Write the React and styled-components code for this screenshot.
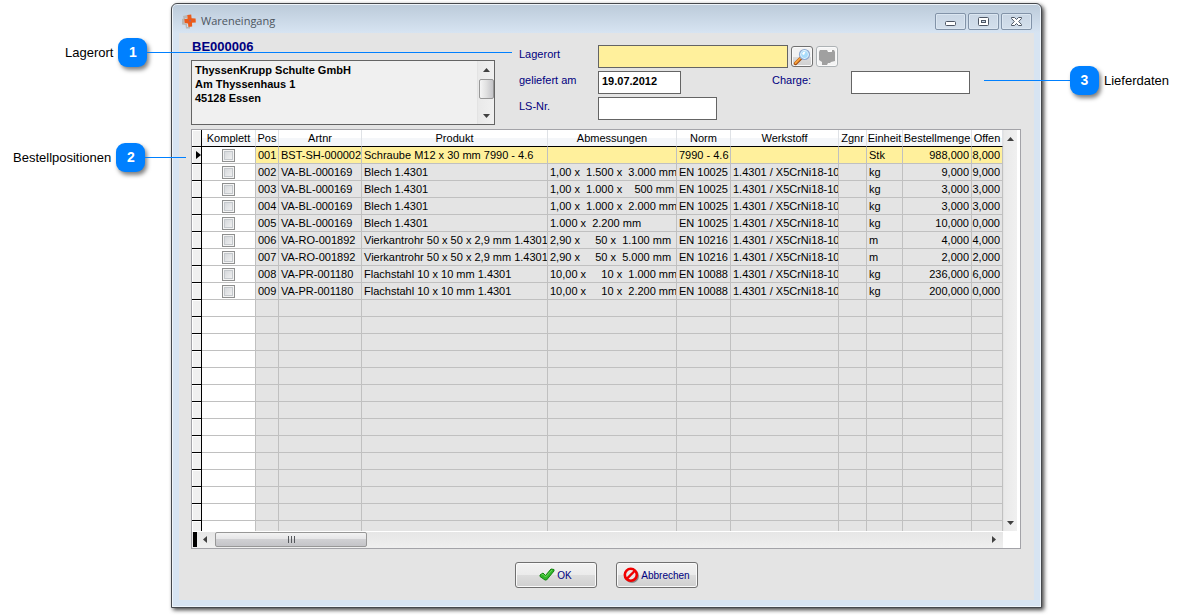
import React from "react";
import styled, { createGlobalStyle, css } from "styled-components";

const GlobalStyle = createGlobalStyle`
  * {
    box-sizing: border-box;
  }

  body {
    margin: 0;
    background: #ffffff;
    color: #000000;
    font-family: "Liberation Sans", Arial, sans-serif;
    font-size: 11px;
  }

  button,
  input {
    font: inherit;
    color: inherit;
  }
`;

const Page = styled.div`
  position: relative;
  min-width: 1000px;
  padding: 3px 141px 8px 171px;
`;

const Window = styled.main`
  border: 1px solid #45484c;
  border-radius: 6px 6px 0 0;
  background: #d7e4f2;
  box-shadow: inset 0 0 0 1px #eef4fa, 2px 2px 4px rgba(0, 0, 0, 0.75);
  padding: 1px 7px 7px;
`;

const TitleBar = styled.header`
  display: flex;
  align-items: center;
  height: 28px;
  margin: 0 -6px;
  padding: 4px 8px 0;
  border-radius: 4px 4px 0 0;
  background: linear-gradient(#bccbda, #d7e4f2);
`;

const Title = styled.h1`
  flex: 1;
  margin: 0 0 0 4px;
  font-family: "Open Sans", "Noto Sans", sans-serif;
  font-size: 11px;
  font-weight: 400;
  line-height: 16px;
  color: #4c555f;
`;

const WindowButtons = styled.div`
  display: flex;
  gap: 2px;
`;

const WindowButton = styled.button`
  display: flex;
  align-items: center;
  justify-content: center;
  width: 31px;
  height: 17px;
  padding: 0;
  border: 1px solid #8293a8;
  border-radius: 2px;
  background: linear-gradient(#c9d6e4, #d3dfec);
  box-shadow: inset 0 0 0 1px #dbe6f1;
`;

const Client = styled.div`
  padding: 6px 13px 12px 12px;
  background: #e4e4e4;
`;

const Top = styled.section`
  display: grid;
  grid-template-columns: 304px 1fr;
  column-gap: 24px;
  margin-bottom: 4px;
`;

const OrderNumber = styled.h2`
  margin: 0 0 5px;
  padding-left: 1px;
  font-size: 13px;
  line-height: 16px;
  color: #000080;
`;

const AddressBox = styled.div`
  display: flex;
  height: 65px;
  border: 1px solid #646464;
  background: #f0f0f0;
`;

const Address = styled.address`
  flex: 1;
  padding: 2px 3px;
  font-style: normal;
  font-weight: 700;
  line-height: 14px;
`;

const Fields = styled.form`
  display: grid;
  grid-template-columns: 79px 174px 79px 1fr;
  grid-auto-rows: 23px;
  row-gap: 3px;
  padding-top: 6px;
`;

const Label = styled.label`
  padding-top: 2px;
  line-height: 14px;
  color: #000080;
`;

const StoreField = styled.div`
  grid-column: 2 / -1;
  display: flex;
  align-items: center;
  gap: 3px;
`;

const TextBox = styled.input`
  width: ${(props) => props.$width};
  height: 23px;
  padding: 0 3px 4px;
  border: 1px solid #646464;
  border-radius: 0;
  background: ${(props) => (props.$required ? "#fff09c" : "#ffffff")};
  font-weight: 700;
  outline: none;
`;

const IconButton = styled.button`
  display: flex;
  align-items: center;
  justify-content: center;
  width: 22px;
  height: 21px;
  padding: 0;
  border: 1px solid #707070;
  border-radius: 3px;
  background: linear-gradient(#f2f2f2 50%, #dddddd 50%, #cfcfcf);
  box-shadow: inset 0 0 0 1px #fafafa;

  &:disabled {
    border-color: #adb2b5;
    background: #f4f4f4;
  }
`;

const GridFrame = styled.section`
  display: grid;
  grid-template-columns: 1fr 17px;
  border: 1px solid #a3a3a8;
  background: #ffffff;
`;

const Table = styled.table`
  width: 100%;
  table-layout: fixed;
  border-collapse: separate;
  border-spacing: 0;
  line-height: 16px;
  background: #e4e4e4;
`;

const Col = styled.col`
  width: ${(props) => props.$width};
`;

const HeadCell = styled.th`
  height: 17px;
  padding: 0;
  border-right: 1px solid #dfe2e6;
  border-bottom: 1px solid #000000;
  background: linear-gradient(#ffffff 50%, #f4f6f9 50%);
  font-weight: 400;
  white-space: nowrap;
`;

const SelectorHead = styled.td`
  height: 17px;
  padding: 0;
  border-right: 1px solid #000000;
  border-bottom: 1px solid #000000;
  background: #f0f0f0;
  box-shadow: inset 1px 1px 0 #ffffff;
`;

const Cell = styled.td`
  height: 17px;
  padding: ${(props) => (props.$amount ? "0 2px 0 0" : "0 0 0 2px")};
  border-right: 1px solid #c0c0c0;
  border-bottom: 1px solid #c0c0c0;
  white-space: pre;
  overflow: hidden;

  ${(props) =>
    props.$check &&
    css`
      padding: 0;
      background: #ffffff;
    `}
`;

const SelectorCell = styled(SelectorHead)`
  padding-left: 4px;

  svg {
    display: block;
  }
`;

const Amount = styled.div`
  display: flex;
  justify-content: flex-end;
  overflow: hidden;
`;

const Row = styled.tr`
  ${(props) =>
    props.$active &&
    css`
      ${Cell}:nth-child(n + 3) {
        background: #fff09c;
      }
    `}

  ${(props) =>
    props.$last &&
    css`
      ${Cell}, ${SelectorCell} {
        height: 10px;
        border-bottom: 0;
      }
    `}
`;

const CheckBox = styled.input`
  appearance: none;
  display: block;
  width: 13px;
  height: 13px;
  margin: 0 auto;
  border: 1px solid #8e8f8f;
  background: linear-gradient(135deg, #cfd2d6, #f6f6f6);
  box-shadow: inset 0 0 0 1px #f4f4f4, inset 0 0 0 2px #c4c8cc;
`;

const VerticalBar = styled.div`
  display: flex;
  flex-direction: column;
  align-items: center;
  width: 17px;
  padding: 6px 0 4px;
  border-left: 1px solid #e3e3e3;
  border-right: ${(props) => (props.$edge ? "3px solid #ffffff" : "0")};
  background: linear-gradient(90deg, #e9e9e9, #f0f0f0);
`;

const VerticalThumb = styled.div`
  width: 15px;
  height: 20px;
  margin-top: 5px;
  border: 1px solid #979797;
  border-radius: 2px;
  background: linear-gradient(90deg, #f5f5f5, #e0e0e0 50%, #c4c4c8);
`;

const HorizontalBar = styled.div`
  display: flex;
  align-items: center;
  height: 17px;
  padding: 0 5px 1px 1px;
  border-top: 1px solid #ffffff;
  background: linear-gradient(#e6e6e6, #efefef);
`;

const SplitHandle = styled.div`
  width: 4px;
  height: 15px;
  margin-right: 5px;
  background: #000000;
`;

const HorizontalThumb = styled.div`
  display: flex;
  align-items: center;
  justify-content: center;
  gap: 2px;
  width: 152px;
  height: 15px;
  margin-left: 6px;
  border: 1px solid #979797;
  border-radius: 2px;
  background: linear-gradient(#f3f3f3, #e4e4e6 50%, #d0d0d3 50%, #c4c4c8);
`;

const Grip = styled.span`
  width: 1px;
  height: 7px;
  background: #55585c;
`;

const Spacer = styled.div`
  flex: 1;
`;

const Actions = styled.footer`
  display: flex;
  justify-content: center;
  gap: 19px;
  margin-top: 13px;
`;

const ActionButton = styled.button`
  display: flex;
  align-items: center;
  justify-content: center;
  gap: 2px;
  width: 82px;
  height: 26px;
  padding: 0;
  border: 1px solid #707070;
  border-radius: 3px;
  background: linear-gradient(#f2f2f2, #ebebeb 48%, #dddddd 50%, #cfcfcf);
  box-shadow: inset 0 0 0 1px #fafafa;
  font-size: 10px;
  color: #000080;
`;

const Callout = styled.aside`
  position: absolute;
  top: ${(props) => props.$top};
  left: ${(props) => props.$left};
  right: ${(props) => props.$right};
  display: flex;
  align-items: center;
  font-size: 13px;
  line-height: 16px;
  pointer-events: none;
`;

const CalloutBadge = styled.span`
  width: 29px;
  height: 29px;
  margin: ${(props) => (props.$before ? "0 5px 0 0" : "0 0 0 5px")};
  border-radius: 9px;
  background: #0080ff;
  box-shadow: 2px 3px 4px rgba(0, 0, 0, 0.5);
  font-size: 14px;
  font-weight: 700;
  line-height: 29px;
  text-align: center;
  color: #ffffff;
`;

const CalloutLine = styled.span`
  width: ${(props) => props.$width};
  height: 1px;
  background: #0080ff;
`;

const Arrow = ({ dir }) => {
  const shapes = {
    up: "M0 5 L3.5 1 L7 5 Z",
    down: "M0 1 L3.5 5 L7 1 Z",
    left: "M5 0 L1 3.5 L5 7 Z",
    right: "M1 0 L5 3.5 L1 7 Z",
  };
  return (
    <svg width="7" height="7" viewBox="0 0 7 7" aria-hidden="true">
      <path d={shapes[dir]} fill="#404040" />
    </svg>
  );
};

const LogoIcon = () => (
  <svg width="16" height="16" viewBox="0 0 16 16" aria-hidden="true">
    <path
      d="M2 3 L6 2 V5 H4 V7 L3 10 L6 11 V14 H9 V15.5 H5 L4.5 12 L1 11.5 V6 L2.5 5.5 Z"
      fill="#b9b7b5"
    />
    <path
      d="M6.2 2 L10.2 1.6 L10.6 5.2 L14.6 5.4 L14.8 9.6 L11 9.8 L11.2 13.6 L7.4 14 L7 10.4 L3.6 10 L3.4 6 L6.6 5.8 Z"
      fill="#ea5b1b"
    />
    <circle cx="9" cy="7.8" r="1" fill="#a2647c" />
  </svg>
);

const MinimizeIcon = () => (
  <svg width="13" height="11" viewBox="0 0 13 11" aria-hidden="true">
    <rect x="1.5" y="5.5" width="10" height="4" rx="1" fill="#fff" stroke="#4d5664" />
  </svg>
);

const MaximizeIcon = () => (
  <svg width="13" height="11" viewBox="0 0 13 11" aria-hidden="true">
    <rect x="1.5" y="1.5" width="10" height="8" rx="1" fill="#fff" stroke="#4d5664" />
    <rect x="4.5" y="4.5" width="4" height="2" fill="#c9d6e4" stroke="#4d5664" />
  </svg>
);

const CloseIcon = () => (
  <svg width="13" height="11" viewBox="0 0 13 11" aria-hidden="true">
    <path
      d="M1.5 1.5 H4.5 L6.5 3.5 L8.5 1.5 H11.5 V2.5 L8.7 5.5 L11.5 8.5 V9.5 H8.5 L6.5 7.5 L4.5 9.5 H1.5 V8.5 L4.3 5.5 L1.5 2.5 Z"
      fill="#fff"
      stroke="#4d5664"
    />
  </svg>
);

const SearchIcon = () => (
  <svg width="18" height="18" viewBox="0 0 18 18" aria-hidden="true">
    <path d="M2.5 15.5 L8 10" stroke="#a04c10" strokeWidth="3.4" strokeLinecap="round" />
    <path d="M2.5 15 L7.5 10" stroke="#f9a13a" strokeWidth="2" strokeLinecap="round" />
    <circle cx="11.5" cy="6.5" r="5" fill="#e4f6ff" stroke="#8fa9d0" strokeWidth="1.2" />
    <circle cx="11.5" cy="6.5" r="3.4" fill="#a9dcfb" />
    <path d="M9 6 Q10 3.5 12.5 3.6 L11 7 Z" fill="#fff" />
  </svg>
);

const BoxIcon = () => (
  <svg width="18" height="18" viewBox="0 0 18 18" aria-hidden="true">
    <path
      d="M2 2 H9 L10 4 H14 V2 H16 L17 4 V13 L13 14 L12 15 H10 L9 17 H4 V14 L1 12 V4 Z"
      fill="#a0a0a0"
    />
    <path d="M10 3.5 H12.5 M12.5 2.5 H14" stroke="#fff" />
  </svg>
);

const CheckIcon = () => (
  <svg width="16" height="14" viewBox="0 0 16 14" aria-hidden="true">
    <path
      d="M1 7 L4 5 L6.5 7.5 L12 1 L15 1.5 V3 L7.5 12 H6 L1 8.5 Z"
      fill="#2fb52a"
      stroke="#14820f"
      strokeLinejoin="round"
    />
    <path d="M2.5 7 L4 6.2 L6.5 9 L13 2" fill="none" stroke="#6ddb58" />
  </svg>
);

const CancelIcon = () => (
  <svg width="16" height="16" viewBox="0 0 16 16" aria-hidden="true">
    <circle cx="9" cy="9" r="5.8" fill="none" stroke="#8a8a8a" strokeWidth="2.4" />
    <circle cx="7.8" cy="7.8" r="6" fill="#e8e8e8" stroke="#f00000" strokeWidth="2.6" />
    <path d="M4 11.6 L11.6 4" stroke="#f00000" strokeWidth="2.4" />
  </svg>
);

const columns = [
  { title: "Komplett", width: "54px" },
  { title: "Pos", width: "23px" },
  { title: "Artnr", width: "83px" },
  { title: "Produkt" },
  { title: "Abmessungen", width: "129px" },
  { title: "Norm", width: "54px" },
  { title: "Werkstoff", width: "108px" },
  { title: "Zgnr", width: "28px" },
  { title: "Einheit", width: "36px" },
  { title: "Bestellmenge", width: "69px" },
  { title: "Offen", width: "31px" },
];

const steel = "1.4301 / X5CrNi18-10";

const positions = [
  ["001", "BST-SH-000002", "Schraube M12 x 30 mm 7990 - 4.6", "", "7990 - 4.6", "", "Stk", "988,000"],
  ["002", "VA-BL-000169", "Blech 1.4301", "1,00 x  1.500 x  3.000 mm", "EN 10025", steel, "kg", "9,000"],
  ["003", "VA-BL-000169", "Blech 1.4301", "1,00 x  1.000 x    500 mm", "EN 10025", steel, "kg", "3,000"],
  ["004", "VA-BL-000169", "Blech 1.4301", "1,00 x  1.000 x  2.000 mm", "EN 10025", steel, "kg", "3,000"],
  ["005", "VA-BL-000169", "Blech 1.4301", "1.000 x  2.200 mm", "EN 10025", steel, "kg", "10,000"],
  ["006", "VA-RO-001892", "Vierkantrohr 50 x 50 x 2,9 mm 1.4301", "2,90 x     50 x  1.100 mm", "EN 10216", steel, "m", "4,000"],
  ["007", "VA-RO-001892", "Vierkantrohr 50 x 50 x 2,9 mm 1.4301", "2,90 x     50 x  5.000 mm", "EN 10216", steel, "m", "2,000"],
  ["008", "VA-PR-001180", "Flachstahl 10 x 10 mm 1.4301", "10,00 x     10 x  1.000 mm", "EN 10088", steel, "kg", "236,000"],
  ["009", "VA-PR-001180", "Flachstahl 10 x 10 mm 1.4301", "10,00 x     10 x  2.200 mm", "EN 10088", steel, "kg", "200,000"],
];

const emptyRows = Array.from({ length: 14 }, (_, i) => i);

const PositionRow = ({ position, active }) => {
  const [pos, artnr, product, size, norm, material, unit, amount] = position;
  return (
    <Row $active={active}>
      <SelectorCell>
        {active && (
          <svg width="5" height="8" viewBox="0 0 5 8" aria-hidden="true">
            <path d="M0 0 L5 4 L0 8 Z" />
          </svg>
        )}
      </SelectorCell>
      <Cell $check>
        <CheckBox type="checkbox" aria-label={`Komplett ${pos}`} />
      </Cell>
      <Cell>{pos}</Cell>
      <Cell>{artnr}</Cell>
      <Cell>{product}</Cell>
      <Cell>{size}</Cell>
      <Cell>{norm}</Cell>
      <Cell>{material}</Cell>
      <Cell />
      <Cell>{unit}</Cell>
      <Cell $amount>
        <Amount>{amount}</Amount>
      </Cell>
      <Cell $amount>
        <Amount>{amount}</Amount>
      </Cell>
    </Row>
  );
};

const App = () => {
  return (
    <>
      <GlobalStyle />
      <Page>
        <Window>
          <TitleBar>
            <LogoIcon />
            <Title>Wareneingang</Title>
            <WindowButtons>
              <WindowButton aria-label="Minimieren">
                <MinimizeIcon />
              </WindowButton>
              <WindowButton aria-label="Maximieren">
                <MaximizeIcon />
              </WindowButton>
              <WindowButton aria-label="Schließen">
                <CloseIcon />
              </WindowButton>
            </WindowButtons>
          </TitleBar>

          <Client>
            <Top>
              <div>
                <OrderNumber>BE000006</OrderNumber>
                <AddressBox>
                  <Address>
                    ThyssenKrupp Schulte GmbH
                    <br />
                    Am Thyssenhaus 1
                    <br />
                    45128 Essen
                  </Address>
                  <VerticalBar>
                    <Arrow dir="up" />
                    <VerticalThumb />
                    <Spacer />
                    <Arrow dir="down" />
                  </VerticalBar>
                </AddressBox>
              </div>

              <Fields>
                <Label htmlFor="lagerort">Lagerort</Label>
                <StoreField>
                  <TextBox id="lagerort" $width="190px" $required />
                  <IconButton type="button" aria-label="Suchen">
                    <SearchIcon />
                  </IconButton>
                  <IconButton type="button" aria-label="Lager" disabled>
                    <BoxIcon />
                  </IconButton>
                </StoreField>
                <Label htmlFor="geliefert">geliefert am</Label>
                <TextBox id="geliefert" $width="83px" defaultValue="19.07.2012" />
                <Label htmlFor="charge">Charge:</Label>
                <TextBox id="charge" $width="119px" />
                <Label htmlFor="lsnr">LS-Nr.</Label>
                <TextBox id="lsnr" $width="119px" />
              </Fields>
            </Top>

            <GridFrame>
              <Table>
                <colgroup>
                  <Col $width="10px" />
                  {columns.map((column) => (
                    <Col key={column.title} $width={column.width} />
                  ))}
                </colgroup>
                <thead>
                  <tr>
                    <SelectorHead />
                    {columns.map((column) => (
                      <HeadCell key={column.title}>{column.title}</HeadCell>
                    ))}
                  </tr>
                </thead>
                <tbody>
                  {positions.map((position, i) => (
                    <PositionRow key={position[0]} position={position} active={i === 0} />
                  ))}
                  {emptyRows.map((i) => (
                    <Row key={i} $last={i === emptyRows.length - 1}>
                      <SelectorCell />
                      {columns.map((column, c) => (
                        <Cell key={column.title} $check={c === 0} />
                      ))}
                    </Row>
                  ))}
                </tbody>
              </Table>
              <VerticalBar $edge>
                <Arrow dir="up" />
                <Spacer />
                <Arrow dir="down" />
              </VerticalBar>
              <HorizontalBar>
                <SplitHandle />
                <Arrow dir="left" />
                <HorizontalThumb>
                  <Grip />
                  <Grip />
                  <Grip />
                </HorizontalThumb>
                <Spacer />
                <Arrow dir="right" />
              </HorizontalBar>
            </GridFrame>

            <Actions>
              <ActionButton type="button">
                <CheckIcon />
                OK
              </ActionButton>
              <ActionButton type="button">
                <CancelIcon />
                Abbrechen
              </ActionButton>
            </Actions>
          </Client>
        </Window>

        <Callout $top="38px" $left="65px">
          Lagerort
          <CalloutBadge>1</CalloutBadge>
          <CalloutLine $width="365px" />
        </Callout>
        <Callout $top="143px" $left="13px">
          Bestellpositionen
          <CalloutBadge>2</CalloutBadge>
          <CalloutLine $width="41px" />
        </Callout>
        <Callout $top="66px" $right="14px">
          <CalloutLine $width="86px" />
          <CalloutBadge $before>3</CalloutBadge>
          Lieferdaten
        </Callout>
      </Page>
    </>
  );
};

export default App;
